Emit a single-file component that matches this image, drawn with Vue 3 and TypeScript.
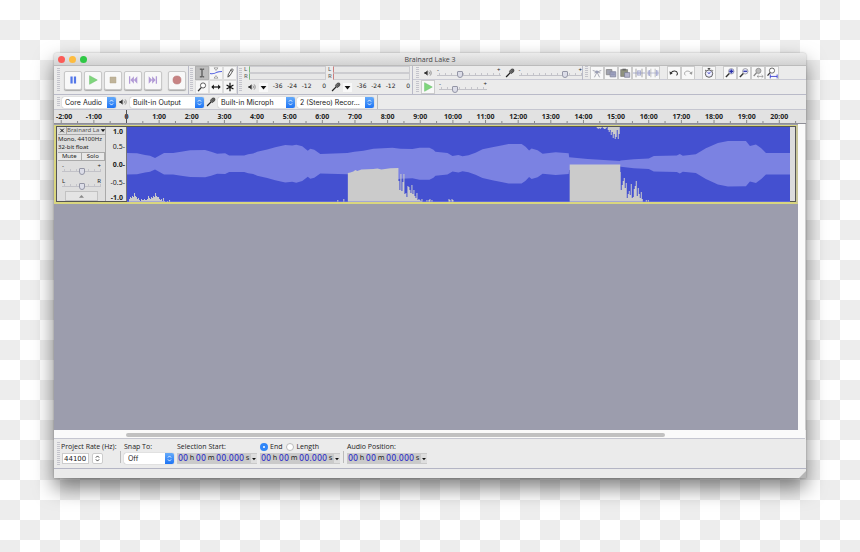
<script setup lang="ts">
import { ref, h, type FunctionalComponent } from 'vue'

const icons: Record<string, string> = {
  pause: '<path d="M4 3h2.6v8H4zM8 3h2.6v8H8z" fill="#5377e8"/>',
  play: '<path d="M3 2v10L12 7z" fill="#7fd67c" stroke="#68bd69" stroke-width=".6"/>',
  stop: '<path d="M3.5 3.5h7v7h-7z" fill="#c0b49a" stroke="#aea284" stroke-width=".5"/>',
  prev: '<path d="M2.3 2.6h1.5v8.8H2.3zM8 2.6v8.8L4 7zM12 2.6v8.8L8 7z" fill="#b29bd6"/>',
  next: '<path d="M10.2 2.6h1.5v8.8h-1.5zM2 2.6v8.8L6 7zM6 2.6v8.8L10 7z" fill="#b29bd6"/>',
  record: '<circle cx="7" cy="7" r="4.7" fill="#c78383" stroke="#b56f6f" stroke-width=".6"/>',
  beam: '<path d="M4.5 2.5h2l.5.5.5-.5h2M7 3v8M4.5 11.5h2L7 11l.5.5h2" fill="none" stroke="#333" stroke-width="1.1"/>',
  envelope: '<path d="M4.7 1h4.6L7 4zM4.7 13h4.6L7 10z" fill="#f5f5f5" stroke="#777" stroke-width=".7"/><path d="M0 7.5c4 1 6-.2 8-1.3 2-1 4-1 6-1" fill="none" stroke="#5260e0" stroke-width="1.2"/>',
  pencil: '<path d="M4.5 11.8l.5-3 3.5-6.3c1.3-.8 2.5.2 2 1.4L7 10zM7.8 3.8l2 1.2M5 9l1.7 1" fill="#fff" stroke="#333" stroke-width=".9"/>',
  lens: '<circle cx="8.2" cy="5.2" r="3" fill="#fff" stroke="#333" stroke-width=".9"/><path d="M6 7.7L2.5 11.8" stroke="#333" stroke-width="1.6"/>',
  arrows: '<path d="M4 7h6" stroke="#111" stroke-width="1.4"/><path d="M1.5 7l3-2.8v5.6zM12.5 7l-3-2.8v5.6z" fill="#111"/>',
  star: '<path d="M7 2v10M3 4.6l8 4.8M3 9.4l8-4.8" stroke="#111" stroke-width="1.4"/>',
  speaker: '<path d="M2 5.5h1.8L6.5 3v8L3.8 8.5H2z" fill="#333"/><path d="M8.2 5c1 1.2 1 2.8 0 4M10 3.4c1.9 2.1 1.9 5.1 0 7.2" fill="none" stroke="#666" stroke-width="1"/>',
  mic: '<path d="M7.5 6.5L1.5 12.5" stroke="#222" stroke-width="1.8"/><path d="M6.3 5.5C7 2.5 9.5.5 12 1.7c1.5 2.3-.5 5-3.6 6z" fill="#777" stroke="#222" stroke-width=".9"/><path d="M8 4l3.5 2M9.5 2.5l3 2" stroke="#222" stroke-width=".6"/>',
  cut: '<path d="M2 4l9 3M12 4L4 7M7 6l-3 6M7 6l3 6" stroke="#9a9ca8" stroke-width="1" fill="none"/><circle cx="6.8" cy="5.8" r="1.6" fill="#9a9eb5"/>',
  copy: '<path d="M1.5 3h6.5v6H1.5z" fill="#9fa1ae" stroke="#888"/><path d="M6 5.5h6.5v6H6z" fill="#a9abc4" stroke="#8588a0"/><path d="M7 7h4.5M7 9h4.5" stroke="#7880aa" stroke-width=".7"/>',
  paste: '<path d="M2 3h8v8H2z" fill="#8e927e" stroke="#777" stroke-width=".8"/><path d="M4 2h4v2H4z" fill="#666"/><path d="M6.5 6.5h6v5.5h-6z" fill="#b3b4cc" stroke="#777a93" stroke-width=".8"/>',
  trim: '<path d="M0 7h14" stroke="#9fa4cc"/><path d="M3.5 2v10M10.5 2v10" stroke="#999" stroke-width="1"/><path d="M5.5 4v6M7 3.5v7M8.7 4v6" stroke="#a0a5cc" stroke-width="1.1"/>',
  silence: '<path d="M0 7h14" stroke="#9fa4cc" stroke-width=".8"/><path d="M4.5 2v10M9.5 2v10" stroke="#aaa" stroke-width=".8"/><path d="M1.5 4v6M3 3.5v7M11 3.5v7M12.6 4v6" stroke="#9ba0cb" stroke-width="1"/>',
  undo: '<path d="M3.5 7c2-3.2 7-2.8 7.5.3.1 1-.4 2-1.2 2.5" fill="none" stroke="#333" stroke-width="1.2"/><path d="M1.8 5l.5 4 3.2-1.5z" fill="#333"/>',
  redo: '<path d="M10.5 7c-2-3.2-7-2.8-7.5.3-.1 1 .4 2 1.2 2.5" fill="none" stroke="#999" stroke-width="1"/><path d="M12.2 5l-.5 4-3.2-1.5z" fill="#999"/>',
  clock: '<circle cx="7" cy="7.7" r="4.3" fill="#eef" stroke="#444" stroke-width="1"/><path d="M5.5 1.7h3M7 1.7v1.6M10.5 3.3l1 1M3.5 3.3l-1 1" stroke="#444" stroke-width="1.1"/><path d="M7 8l1.8-2.5M7 8L5.5 6" stroke="#3a3fbd" stroke-width="1"/>',
  zoomin: '<circle cx="8.5" cy="5" r="3.2" fill="#b9bdf2" stroke="#777" stroke-width=".6"/><path d="M6.2 7.5l-4 4.2" stroke="#333" stroke-width="1.6"/><path d="M6.3 5h4.4M8.5 2.8v4.4" stroke="#262ca4" stroke-width="1.4"/>',
  zoomout: '<circle cx="8.5" cy="5" r="3.2" fill="#e4e5f8" stroke="#777" stroke-width=".7"/><path d="M6.2 7.5l-4 4.2" stroke="#333" stroke-width="1.6"/><path d="M6.3 5h4.4" stroke="#262ca4" stroke-width="1.4"/>',
  zoomsel: '<circle cx="7.5" cy="4.5" r="3" fill="#bbb" stroke="#888" stroke-width=".9"/><path d="M5.3 6.7L2 10.5" stroke="#888" stroke-width="1.5"/><path d="M6 11h7M7.8 9.3L6 11l1.8 1.7M11.2 9.3L13 11l-1.8 1.7" fill="none" stroke="#888" stroke-width=".8"/>',
  zoomfit: '<circle cx="7" cy="4.2" r="3" fill="#fff" stroke="#444" stroke-width=".9"/><path d="M4.8 6.5L1.8 10" stroke="#333" stroke-width="1.5"/><path d="M5 11h8M5 8.7v4.6M13 8.7v4.6" fill="none" stroke="#3338d0" stroke-width="1"/>',
  down: '<path d="M2.5 4.5h9L7 10z" fill="#111"/>',
  up: '<path d="M2 9.5h10L7 4z" fill="#888"/>',
  updown: '<path d="M4.5 5.6L7 3l2.5 2.6M4.5 8.4L7 11l2.5-2.6" fill="none" stroke="currentColor" stroke-width="1.3"/>',
  close: '<path d="M3.5 3.5l7 7M10.5 3.5l-7 7" stroke="#111" stroke-width="2"/>',
}
const Icon: FunctionalComponent<{ name: string }> = (p) =>
  h('svg', { viewBox: '0 0 14 14', class: 'icon', 'aria-hidden': 'true', innerHTML: icons[p.name] })
Icon.props = ['name']

const transport = ['pause', 'play', 'stop', 'prev', 'next', 'record']
const tools = ['beam', 'envelope', 'pencil', 'lens', 'arrows', 'star']
const tool = ref('beam')
const editGroups = [
  ['cut', 'copy', 'paste', 'trim', 'silence'],
  ['undo', 'redo'],
  ['clock'],
  ['zoomin', 'zoomout', 'zoomsel', 'zoomfit'],
]
const meters = [
  { icon: 'speaker', kind: 'play' },
  { icon: 'mic', kind: 'rec' },
]
const devices = [
  { icon: '', text: 'Core Audio', size: 'w54', label: 'Audio host' },
  { icon: 'speaker', text: 'Built-in Output', size: 'w74', label: 'Playback device' },
  { icon: 'mic', text: 'Built-in Microph', size: 'w77', label: 'Recording device' },
  { icon: '', text: '2 (Stereo) Recor...', size: 'w77', label: 'Recording channels' },
]
const outVol = ref(34)
const inVol = ref(76)
const speed = ref(30)
const gain = ref(50)
const pan = ref(50)
const edge = ref('end')
const rate = ref('44100')

const at = (minute: number) => `${((72.5 + minute * 32.64) / 752) * 100}%`
const minutes = Array.from({ length: 23 }, (_, i) => i - 2)
const halves = Array.from({ length: 23 }, (_, i) => i - 1.5)
const clock = (m: number) => (m === 0 ? '0' : `${m}:00`)

type P = [number, number]
// Average level: [x, half height] measured from the centre line.
const levels: P[] = [
  [0, 10.7], [10, 10.5], [18, 8.7], [23, 8], [28, 5.8], [32, 8], [37, 10.8], [46, 10.8], [54, 12], [63, 13.4], [78, 13.6], [84, 12], [90, 10],
  [98, 10.4], [102, 8.3], [117, 8.3], [121, 9.5], [126, 10.2], [130, 12], [140, 14.3], [148, 16.5], [158, 18.8], [165, 18.1], [169, 19], [175, 17.4],
  [180.5, 13], [183, 15], [187, 14], [193, 9.8], [220, 10.6], [227, 12], [236, 13], [246, 15], [265, 16], [273, 15], [285, 14.6], [292, 16], [302, 16],
  [306, 14], [308, 12], [320, 10.7], [325, 7.7], [331, 8.8], [335, 7.5], [341, 8.5], [348, 11], [355, 14.4], [366, 16.8], [375, 18.5], [381, 19.7], [394, 19.7],
  [398, 17], [401.5, 13.2], [404, 15.2], [410, 13.5], [415, 10], [428, 11.4], [441, 10.4], [441.5, 6.4], [460, 4.6], [492, 2.6], [493, 3.1], [506, 4.5],
  [521, 5.3], [526, 7.7], [549, 8.3], [552, 9.8], [555, 8], [568, 9.4], [578, 15.4], [590, 20.8], [600, 22.7], [618, 22.6], [622, 17.7], [628, 19.3],
  [633, 15.6], [638, 10.8], [662, 10.8],
]
const mid = 36.7
const body =
  'M' + levels.map(([x, v]) => `${x} ${mid - v}`).join('L') + 'L' +
  [...levels].reverse().map(([x, v]) => `${x} ${mid + v}`).join('L') + 'Z'

const bars = (x0: number, hs: number[], bottom = true, w = 1) =>
  hs.map((v, i) => (bottom ? `M${x0 + i * w} 75v${-v}h${w}v${v}z` : `M${x0 + i * w} 0v${v}h${w}V0z`)).join('')
const gaps =
  bars(2, [3, 5, 4, 6, 5, 9, 6, 5, 3, 4, 2, 1, 3, 2, 2, 3, 2, 2, 3, 6, 4, 3, 5, 4, 6, 5, 9, 6, 5, 5, 3, 2, 3, 1, 4, 1, 0, 0, 1, 0, 2]) +
  bars(210, [2, 0, 0, 0, 0, 0, 3]) +
  'M220.5 75V46L223 45.5 226 44.5 228 43 230 44 234 42.5 246 42 250 41.5 254 42.5 263 41.2 271 41V75z' +
  bars(271, [21, 12, 28, 11, 20, 28, 8, 9, 5, 16, 15, 12, 9, 17, 8, 12, 6, 4, 9, 2, 3, 2, 1, 3, 0, 0, 0, 0, 2, 0, 2, 3, 0, 2]) +
  bars(321, [3, 2, 0, 3, 2]) +
  'M442 75V37.4h50.5V75z' +
  bars(492, [30, 12, 17, 21, 24, 14, 19, 4, 8, 11, 7, 18, 4, 5, 13, 16, 21, 6, 14, 8, 4, 10, 3]) +
  bars(518, [2, 0, 2]) +
  bars(469, [1, 2, 1, 2, 1, 0, 1, 2, 2, 1, 0, 3, 5, 3, 8, 5, 11, 7, 12, 10, 3, 12, 7], false)
</script>

<template>
  <main class="desk">
    <section class="window">
      <header class="title">
        <span class="lights"><i class="red"></i><i class="amber"></i><i class="green"></i></span>
        <h1>Brainard Lake 3</h1>
      </header>

      <div class="toolbars">
        <div class="bar transport">
          <i class="grip"></i>
          <button v-for="t in transport" :key="t" :class="['key', t]" :aria-label="t"><Icon :name="t" /></button>
        </div>
        <div class="bar">
          <i class="grip"></i>
          <div class="tools">
            <button v-for="t in tools" :key="t" :class="['cell', { on: tool === t }]" :aria-label="t" @click="tool = t"><Icon :name="t" /></button>
          </div>
        </div>
        <div class="bar meters">
          <i class="grip"></i>
          <div v-for="m in meters" :key="m.kind" class="meter">
            <div class="channels"><span>L</span><b :class="m.kind"></b><span>R</span><b :class="m.kind"></b></div>
            <div class="scale">
              <Icon :name="m.icon" />
              <button class="drop" :aria-label="m.kind + ' meter menu'"><Icon name="down" /></button>
              <span>-36</span><span>-24</span><span>-12</span><span>0</span>
            </div>
          </div>
        </div>
        <div class="right">
          <div class="row top">
            <div class="bar mixer">
              <i class="grip"></i>
              <Icon name="speaker" />
              <label class="slide"><em>-</em><input v-model="outVol" type="range" aria-label="Playback volume" /><em>+</em></label>
              <Icon name="mic" />
              <label class="slide"><em>-</em><input v-model="inVol" type="range" aria-label="Recording volume" /><em>+</em></label>
            </div>
            <div class="edit">
              <i class="grip"></i>
              <div v-for="g in editGroups" :key="g[0]" class="group">
                <button v-for="t in g" :key="t" class="cell boxed" :aria-label="t"><Icon :name="t" /></button>
              </div>
            </div>
          </div>
          <div class="row">
            <i class="grip"></i>
            <button class="cell boxed" aria-label="Play at speed"><Icon name="play" /></button>
            <label class="slide short"><em>-</em><input v-model="speed" type="range" aria-label="Playback speed" /><em>+</em></label>
          </div>
        </div>
      </div>

      <div class="devices">
        <i class="grip"></i>
        <template v-for="d in devices" :key="d.text">
          <Icon v-if="d.icon" :name="d.icon" />
          <span :class="['pick', d.size]"><select :aria-label="d.label"><option>{{ d.text }}</option></select><i><Icon name="updown" /></i></span>
        </template>
        <i class="rule"></i>
      </div>

      <svg class="ruler">
        <line v-for="m in halves" :key="'h' + m" :x1="at(m)" :x2="at(m)" y1="11" y2="13" />
        <line v-for="m in minutes" :key="'m' + m" :x1="at(m)" :x2="at(m)" y1="10" y2="13" />
        <text v-for="m in minutes.slice(1)" :key="m" :x="at(m)" y="9" text-anchor="middle">{{ clock(m) }}</text>
        <text x="2" y="9">-2:00</text>
        <line class="cursor" :x1="at(0)" :x2="at(0)" y1="0" y2="13" />
      </svg>

      <div class="work">
        <div class="canvas">
          <article class="track">
            <div class="panel">
              <div class="name"><button aria-label="Close track"><Icon name="close" /></button><button class="menu"><span>Brainard La</span><Icon name="down" /></button></div>
              <p>Mono, 44100Hz</p>
              <p>32-bit float</p>
              <div class="pair"><button>Mute</button><button>Solo</button></div>
              <label class="knob"><em>-</em><em>+</em><input v-model="gain" type="range" aria-label="Gain" /></label>
              <label class="knob"><em>L</em><em>R</em><input v-model="pan" type="range" aria-label="Pan" /></label>
              <button class="fold" aria-label="Collapse"><Icon name="up" /></button>
            </div>
            <div class="amps"><b>1.0</b><span>0.5-</span><b>0.0-</b><span>-0.5-</span><b>-1.0</b></div>
            <svg class="wave" viewBox="0 0 662 75" preserveAspectRatio="none" role="img" aria-label="Waveform">
              <rect width="662" height="75" fill="#4450d0" />
              <path :d="body" fill="#7b82e2" />
              <path :d="gaps" fill="#cbcbcb" />
              <path d="M0 74.5H662" stroke="#7b82e2" stroke-opacity=".5" />
            </svg>
          </article>
        </div>
        <div class="vscroll"></div>
      </div>
      <div class="hscroll"><i></i></div>

      <footer class="selection">
        <i class="grip"></i>
        <div class="field first">
          <label for="rate">Project Rate (Hz):</label>
          <div class="line"><input id="rate" v-model="rate" type="text" /><button class="spin" aria-label="Choose rate"><Icon name="updown" /></button></div>
        </div>
        <i class="rule"></i>
        <div class="field snap">
          <label for="snap">Snap To:</label>
          <span class="pick w50"><select id="snap"><option>Off</option></select><i><Icon name="updown" /></i></span>
        </div>
        <div class="field">
          <span>Selection Start:</span>
          <div class="time"><b>00</b>h<b>00</b>m<b>00.000</b>s<button aria-label="Start format"><Icon name="down" /></button></div>
        </div>
        <div class="field">
          <div class="radios">
            <label><input v-model="edge" type="radio" value="end" />End</label>
            <label><input v-model="edge" type="radio" value="length" />Length</label>
          </div>
          <div class="time"><b>00</b>h<b>00</b>m<b>00.000</b>s<button aria-label="End format"><Icon name="down" /></button></div>
        </div>
        <i class="rule"></i>
        <div class="field">
          <span>Audio Position:</span>
          <div class="time"><b>00</b>h<b>00</b>m<b>00.000</b>s<button aria-label="Position format"><Icon name="down" /></button></div>
        </div>
      </footer>
      <div class="status"><svg viewBox="0 0 7 7"><path d="M7 0v7H0z" fill="#b5b5b5" /></svg></div>
    </section>
  </main>
</template>

<style>
body { background: repeating-conic-gradient(#ededed 0 25%, #fff 0 50%) 0 0 / 40px 40px; }
</style>

<style scoped>
* { box-sizing: border-box; }
.desk { min-height: 100vh; display: flex; padding: 53px 54px 74px; font: 7px/9px "Noto Sans", sans-serif; color: #222; }
.window { flex: 1; min-width: 0; display: flex; flex-direction: column; background: #ebebeb; border-radius: 3px 3px 0 0; box-shadow: 0 10px 20px rgba(0, 0, 0, .5), 0 0 2px rgba(0, 0, 0, .3); }
button, input, select { font: inherit; color: inherit; margin: 0; padding: 0; border: 0; background: none; border-radius: 0; }
i, em { font-style: normal; }
p, h1 { margin: 0; }
.title { display: grid; grid-template-columns: 1fr auto 1fr; align-items: center; height: 13px; border-radius: 3px 3px 0 0; background: linear-gradient(#ebebeb, #d2d2d2); border-bottom: 1px solid #bbb; }
h1 { font-size: 7px; font-weight: 400; color: #444; font-family: "Open Sans", sans-serif; }
.lights { display: flex; gap: 4px; padding-left: 4px; }
.lights i { width: 7px; height: 7px; border-radius: 50%; }
.red { background: #fc5b57; } .amber { background: #fdbc40; } .green { background: #2fc845; }
.icon { display: block; width: 12px; height: 12px; flex: none; }
.grip { width: 3px; margin: 2px 2px 2px 3px; align-self: stretch; flex: none; background: repeating-linear-gradient(#c4c4cc 0 1px, transparent 1px 2px); }

.toolbars { display: flex; height: 29px; border-bottom: 1px solid #b9bac8; }
.bar { display: flex; align-items: center; border-right: 1px solid #b9bac8; }
.transport { gap: 2px; width: 135px; }
.transport .grip { margin-right: 0; }
.key { display: flex; align-items: center; justify-content: center; width: 18px; height: 19px; border: 1px solid #c8c8c8; border-radius: 2px; background: #f8f8f8; box-shadow: 0 1px 1px #aaa; }
.key.record { margin-left: 4px; }
.tools { display: grid; grid-template-columns: repeat(3, 14px); }
.cell { display: flex; align-items: center; justify-content: center; width: 14px; height: 14px; border: 1px solid #ddd; background: #f6f6f6; }
.cell.on { background: #bdbdbd; border-color: #b0b0b0; }
.cell.boxed { border: 1px solid #ccc; background: #f8f8f8; }
.bar .grip { margin-right: 2px; margin-left: 1px; }
.transport .grip { margin-left: 3px; }
.meters { width: 175px; gap: 2px; padding-right: 2px; align-items: stretch; }
.meters .grip { margin-right: 0; }
.meter { flex: 1; }
.channels { display: grid; grid-template-columns: 4px 1fr; column-gap: 1px; font-size: 6px; line-height: 7px; color: #555; }
.channels b { height: 7px; border: 1px solid #ccccd0; background: #e7e7e7; }
.channels .play { border-left-color: #7cbd7c; } .channels .rec { border-left-color: #cc8080; }
.scale { display: flex; align-items: center; font: 6px/9px "DejaVu Sans", sans-serif; height: 14px; }
.scale .icon { width: 10px; height: 10px; margin-left: 3px; }
.drop { width: 9px; height: 9px; background: #f8f8f8; margin: 0 0 0 2px; }
.drop .icon { margin: 0; width: 9px; height: 9px; }
.scale span { flex: 1; text-align: right; padding-bottom: 3px; }
.right { flex: 1; min-width: 0; }
.row { display: flex; align-items: center; height: 14px; }
.row.top { border-bottom: 1px solid #c9cad4; }
.row > .grip { margin: 1px 2px 1px 3px; }
.mixer { width: 170px; height: 14px; gap: 4px; }
.mixer .icon { width: 10px; height: 10px; }
.mixer .grip { margin: 1px 0 1px 3px; }
.slide { flex: 1; display: flex; height: 12px; position: relative; align-items: flex-start; justify-content: space-between; font-size: 6px; line-height: 6px; }
.slide input { position: absolute; left: 0; top: 4px; width: 100%; }
.slide.short { flex: none; width: 48px; margin-left: 4px; }
input[type=range] { appearance: none; height: 8px; background: repeating-linear-gradient(90deg, #c4c4ca 0 1px, transparent 1px 6px) 2px 2px / 100% 2px no-repeat, linear-gradient(#c2c2c8, #c2c2c8) 0 4px / 100% 1px no-repeat; }
input[type=range]::-webkit-slider-thumb { appearance: none; width: 6px; height: 7px; border: 1px solid #9496a6; border-radius: 1px 1px 3px 3px; background: #dcdde8; }
.edit { display: flex; align-items: center; gap: 7px; }
.edit .grip { margin: 0 -5px 0 2px; height: 12px; }
.group { display: flex; }

.devices { display: flex; align-items: center; height: 15px; border-bottom: 1px solid #c5c6d0; font-family: Inter, sans-serif; }
.devices .grip { margin-right: 0; }
.devices > .icon { width: 10px; height: 10px; margin: 0 0 0 2px; }
.pick { position: relative; display: flex; height: 11px; margin-left: 2px; background: #fff; border-radius: 2px; box-shadow: 0 0 1px #888; }
.pick select { appearance: none; width: 100%; padding: 0 9px 0 4px; line-height: 11px; outline: 0; }
.devices select { padding-left: 3px; }
.pick > i { position: absolute; right: 0; top: 0; width: 9px; height: 11px; border-radius: 0 2px 2px 0; background: linear-gradient(#65abfa, #1e74f5); color: #fff; pointer-events: none; }
.pick > i .icon { width: 9px; height: 11px; }
.w50 { width: 50px; } .w54 { width: 54px; } .w74 { width: 74px; } .w77 { width: 77px; }
.rule { width: 1px; align-self: stretch; background: #bbb; margin: 0 3px; }

.ruler { display: block; width: 100%; height: 14px; background: #e2e2e2; border-bottom: 1px solid #8e8e96; flex: none; }
.ruler text { font: bold 7px "Noto Sans", sans-serif; fill: #222; }
.ruler line { stroke: #8a8a8a; }
.ruler .cursor { stroke: #555; }

.work { flex: 1; display: flex; }
.canvas { flex: 1; background: #9c9dad; min-width: 0; padding-top: 1px; }
.vscroll { width: 8px; background: #fafafa; border-right: 1px solid #ccc; }
.track { display: flex; height: 79px; border: 1px solid #d9d67f; border-left-width: 2px; border-right: 2px solid #c9c69a; border-bottom-width: 2px; background: #dcdcdc; box-shadow: inset 0 0 0 1px #555; padding: 1px; }
.panel { width: 49px; display: flex; flex-direction: column; padding-left: 1px; font-size: 6px; line-height: 8px; border-right: 1px solid #aaa; background: #dedede; }
.name { display: flex; height: 8px; border-bottom: 1px solid #aaa; }
.name .icon { width: 8px; height: 7px; }
.menu { flex: 1; display: flex; border-left: 1px solid #aaa; justify-content: space-between; line-height: 7px; white-space: nowrap; }
.menu span { color: #555; }
.panel p { white-space: nowrap; }
.pair { display: grid; grid-template-columns: 1fr 1fr; margin-top: 1px; }
.pair button { height: 9px; border: 1px solid #aaa; border-left-width: 0; background: #e8e8e8; line-height: 7px; }
.knob { display: grid; grid-template-columns: 1fr 1fr; grid-template-rows: 4px 8px; padding: 2px 4px 0; height: 15px; font-size: 6px; line-height: 6px; }
.knob em:nth-child(2) { text-align: right; }
.knob input { grid-column: 1 / 3; width: 100%; }
.fold { display: flex; justify-content: center; align-items: center; flex: 1; margin: 0 7px; border: 1px solid #c2c2c2; background: #e4e4e4; }
.fold .icon { width: 7px; height: 7px; }
.amps { display: grid; grid-template-rows: 15px 18px 18px 15px 9px; width: 21px; padding-right: 1px; text-align: right; font-size: 7px; line-height: 9px; background: #e2e2e2; border-right: 1px solid #777; }
.amps b { font-weight: 700; }
.amps > :first-child, .amps > :last-child { padding-right: 2px; }
.wave { flex: 1; min-width: 0; height: 75px; margin-right: 5px; display: block; }
.hscroll { height: 9px; background: #fafafa; border-bottom: 1px solid #c5c6d0; padding: 3px 140px 0 72px; margin-right: 1px; }
.hscroll i { display: block; height: 4px; border-radius: 2px; background: #c1c1c1; }

.selection { display: flex; align-items: stretch; gap: 3px; height: 30px; padding: 3px 0 2px; border-bottom: 1px solid #b4b5c4; }
.selection .grip { margin: 0 -2px 0 3px; }
.selection .rule { margin: 9px 0 3px; }
.field { display: flex; flex-direction: column; gap: 2px; white-space: nowrap; font: 7px/9px "Open Sans", sans-serif; }
.first { width: 56px; }
.snap { width: 50px; }
.snap .pick { margin: 0; font-family: Inter, sans-serif; font-size: 7px; }
.line { display: flex; gap: 3px; padding-left: 1px; }
.line input { width: 27px; height: 11px; padding-left: 1px; background: #fff; border: 1px solid #ccc; font: 7px "DejaVu Sans", sans-serif; }
.spin { width: 11px; height: 11px; border: 1px solid #ccc; border-radius: 2px; background: #fff; }
.spin .icon { width: 9px; height: 9px; }
.time { display: flex; align-items: center; justify-content: space-between; width: 80px; height: 11px; padding: 0 0 0 1px; background: #cacaca; font: 7px/11px "DejaVu Sans", sans-serif; }
.time b { font-size: 8px; font-weight: 400; color: #2426c8; }
.time button { width: 6px; height: 9px; background: #dedede; }
.time .icon { width: 6px; height: 6px; }
.radios { display: flex; gap: 4px; }
.radios label { display: flex; align-items: center; gap: 2px; }
.radios input { appearance: none; width: 8px; height: 8px; border-radius: 50%; background: #fff; border: 1px solid #bbb; }
.radios input:checked { border: 3px solid #2f86f8; }
.status { display: flex; justify-content: flex-end; align-items: flex-end; height: 9px; }
.status svg { width: 7px; height: 7px; }
</style>
